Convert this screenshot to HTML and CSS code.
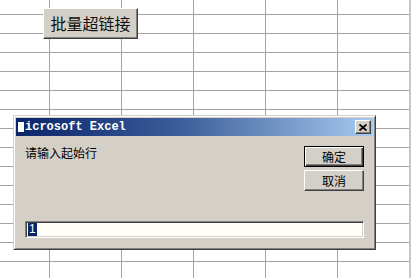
FILE: index.html
```html
<!DOCTYPE html>
<html lang="zh-CN">
<head>
    <meta charset="UTF-8">
    <title>批量超链接</title>
    <link rel="stylesheet" href="styles.css">
</head>
<body>
    <div class="sheet">
        <!-- floating macro button on the sheet -->
        <button class="macro-btn">批量超链接</button>

        <!-- InputBox dialog -->
        <div class="dialog">
            <div class="title-bar">
                <span class="title-text"><span class="app-icon"></span>icrosoft Excel</span>
                <button class="close-btn" aria-label="关闭">
                    <svg width="8" height="7" viewBox="0 0 8 7">
                        <path d="M0.5 0.5 L7.5 6.5 M7.5 0.5 L0.5 6.5" stroke="#000" stroke-width="1.8" fill="none"/>
                    </svg>
                </button>
            </div>
            <div class="dialog-body">
                <div class="dialog-main">
                    <p class="prompt">请输入起始行</p>
                    <div class="dialog-buttons">
                        <button class="dlg-btn default">确定</button>
                        <button class="dlg-btn">取消</button>
                    </div>
                </div>
                <div class="input-box"><span class="selected">1</span></div>
            </div>
        </div>
    </div>
</body>
</html>
```

FILE: styles.css
```css
:root {
    --face: #d4d0c8;
    --shadow: #808080;
    --dark: #404040;
    --grid: #a4a4a4;
    --navy: #0a246a;
}

body {
    margin: 0;
    font-family: "Liberation Sans", "Noto Sans CJK SC", sans-serif;
    background: #fff;
}

/* Worksheet grid */
.sheet {
    position: relative;
    width: 411px;
    height: 278px;
    box-sizing: border-box;
    overflow: hidden;
    border-right: 2px solid #c6c6c6;
    background-color: #fff;
    background-image:
        linear-gradient(to right, var(--grid) 1px, transparent 1px),
        linear-gradient(to bottom, var(--grid) 1px, transparent 1px);
    background-size: 72px 19px;
    background-position: 49px 0, 0 14px;
}

/* Classic 3D buttons */
.macro-btn {
    position: absolute;
    left: 43px;
    top: 8px;
    width: 95px;
    height: 31px;
    padding: 0 0 2px;
    background: var(--face);
    border: 1px solid;
    border-color: #fff var(--dark) var(--dark) #fff;
    box-shadow: inset -1px -1px 0 var(--shadow);
    font-family: "Noto Sans CJK SC", sans-serif;
    font-size: 16px;
    color: #111;
}

/* Dialog window */
.dialog {
    position: absolute;
    left: 13px;
    top: 115px;
    width: 363px;
    height: 135px;
    box-sizing: border-box;
    display: flex;
    flex-direction: column;
    padding: 2px;
    background: var(--face);
    border: 1px solid;
    border-color: var(--face) var(--dark) var(--dark) var(--face);
    box-shadow: inset 1px 1px 0 #fff, inset -1px -1px 0 var(--shadow);
}

.title-bar {
    height: 18px;
    display: flex;
    align-items: center;
    justify-content: space-between;
    padding: 0 2px 0 2px;
    background: linear-gradient(to right, var(--navy), #3a5c98 45%, #a6caf0);
}

.title-text {
    display: flex;
    align-items: center;
    color: #fff;
    font-family: "Liberation Mono", monospace;
    font-weight: bold;
    font-size: 12px;
}

.app-icon {
    width: 6px;
    height: 10px;
    margin-right: 1px;
    background: #fff;
}

.close-btn {
    width: 16px;
    height: 14px;
    padding: 0;
    display: flex;
    align-items: center;
    justify-content: center;
    background: var(--face);
    border: 1px solid;
    border-color: #fff var(--dark) var(--dark) #fff;
    box-shadow: inset -1px -1px 0 var(--shadow);
}

.dialog-body {
    flex: 1;
    display: flex;
    flex-direction: column;
    padding: 10px 9px 9px;
}

.dialog-main {
    flex: 1;
    display: flex;
    justify-content: space-between;
}

.prompt {
    margin: 0;
    font-family: "Noto Sans CJK SC", sans-serif;
    font-size: 12px;
    line-height: 14px;
    color: #000;
}

.dialog-buttons {
    display: flex;
    flex-direction: column;
    gap: 3px;
}

.dlg-btn {
    width: 60px;
    height: 21px;
    padding: 0;
    background: var(--face);
    border: 1px solid;
    border-color: #fff var(--dark) var(--dark) #fff;
    box-shadow: inset -1px -1px 0 var(--shadow);
    font-family: "Noto Sans CJK SC", sans-serif;
    font-size: 12px;
    color: #000;
}

.dlg-btn.default {
    border: 1px solid #000;
    box-shadow: inset 1px 1px 0 #fff, inset -1px -1px 0 var(--dark), inset -2px -2px 0 var(--shadow);
}

.input-box {
    height: 17px;
    box-sizing: border-box;
    display: flex;
    align-items: center;
    padding-left: 2px;
    background: #fffef8;
    border: 1px solid;
    border-color: var(--shadow) #fff #fff var(--shadow);
    box-shadow: inset 1px 1px 0 var(--dark), inset -1px -1px 0 var(--face);
    font-family: "Liberation Sans", sans-serif;
    font-size: 12px;
}

.selected {
    padding: 0 1px;
    line-height: 13px;
    background: var(--navy);
    color: #fff;
}
```
